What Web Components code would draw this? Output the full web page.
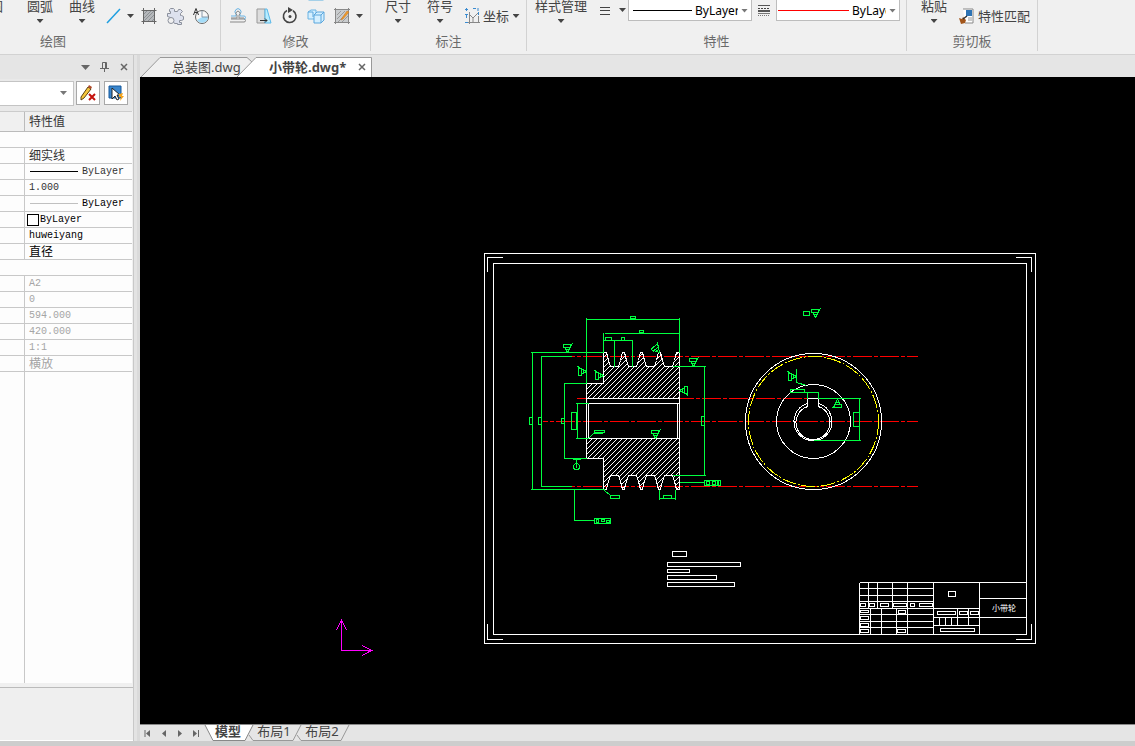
<!DOCTYPE html>
<html lang="zh-CN">
<head>
<meta charset="utf-8">
<title>小带轮.dwg</title>
<style>
html, body { height: 100%; margin: 0; }
body { font: 13px/16px "Noto Sans", "Noto Sans CJK SC", sans-serif; color: #444; background: #efefef; overflow: hidden; }
</style>
</head>
<body>
<cad-app></cad-app>
<script>
const base = `*{box-sizing:border-box} button,select{font:inherit;color:inherit;border:0;background:none;padding:0;margin:0;border-radius:0} svg{display:block;flex:none}`;
const define = (name, css, html) => customElements.define(name, class extends HTMLElement {
  constructor() {
    super();
    const t = document.createElement('template');
    t.innerHTML = `<style>${base}${css}</style>${typeof html === 'function' ? html(this) : html}`;
    this.attachShadow({ mode: 'open' }).append(t.content.cloneNode(true));
  }
});

define('drop-arrow', `:host{display:block;width:7px;height:4px;flex:none;background:#444;clip-path:polygon(0 0,100% 0,50% 100%)}`, '');

/* Ribbon */
define('ribbon-group',
  `:host{display:flex;flex-direction:column;flex:none;height:51px;border-right:1px solid #d2d2d2}
   .body{display:flex;align-items:flex-end;height:32px}
   .cap{text-align:center;line-height:18px;color:#6a6a6a}`,
  el => `<div class="body"><slot></slot></div><div class="cap">${el.getAttribute('caption')}</div>`);

define('large-button',
  `:host{display:block;width:42px;flex:none}
   button{display:flex;flex-direction:column;align-items:center;width:100%;padding-bottom:9px;white-space:nowrap;line-height:16px;gap:5px}`,
  `<button><span><slot></slot></span><drop-arrow></drop-arrow></button>`);

const icons = {
  line: `<path d="M2 16 15 2" stroke="#1f9fe0" stroke-width="1.5"/>`,
  hatch: `<path d="M4 3h11v11H4z" fill="#b5b8bb"/><path d="M4 7l4-4M4 11l8-8M4 14 15 3M8 14l7-7M12 14l3-3" stroke="#8c9094"/><path d="M1.500 3.500h15M1.500 14.500h15M3.500 1v16M14.500 1v16" stroke="#666"/>`,
  gear: `<path d="M1.500 6.500h3v-2h-1v-2l1-1h3l1 1v2h3l1-2h2l2 2-2 2v2h1l2 1v3l-2 1h-2v2h2v2h-4v-1h-3L4.500 10.500l-3-1z" fill="#dde1ee" stroke="#8b909c"/><circle cx="5" cy="13.500" r="3" fill="#f0f0f0" stroke="#8b909c"/>`,
  region: `<circle cx="10" cy="10" r="6.500" fill="#f7f7f7" stroke="#666"/><path d="M10 10h6a6 6 0 0 1-11 3z" fill="#a4dcf8"/><path d="M10 3.500V10h6.500" fill="none" stroke="#89a"/><path d="M1.500 8 4 1.500 6.500 8M2.500 5.500h3" fill="none" stroke="#333"/>`,
  offset: `<path d="M2 12h14M1 15h14a1 1 0 0 0 0-3" stroke="#888" fill="none"/><path d="M2 9h5V7a3 3 0 1 1 4 0v2h4a1.500 1.500 0 0 1 0 3" fill="none" stroke="#6ab4e4"/><path d="M2 11h6V8a2 2 0 1 1 2 0v3h5" fill="none" stroke="#888"/>`,
  trapezoid: `<path d="M2 2h8v14H2z" fill="#ddd" stroke="#999"/><path d="M10 2h2l4 14h-6z" fill="#b9edff" stroke="#5bb8e8"/><path d="M5 13.500h7M10 11.500l2 2-2 2" fill="none" stroke="#333"/>`,
  rotate: `<path d="M6 3.500A6.300 6.300 0 1 0 12 3.800" fill="none" stroke="#444" stroke-width="1.600"/><path d="M7 0v6l5-3z" fill="#444"/><circle cx="9" cy="9.500" r="1.500" fill="#444"/>`,
  boxes: `<path d="M1 5l3-2h5v6l-2 3H1z" fill="#d4efff" stroke="#6ab4e4"/><path d="M7 8l3-3h7v8l-3 3H7z" fill="#d4efff" stroke="#5aa6dc"/><path d="M7 8h7v8M14 8l3-3M1 5h5v5" fill="none" stroke="#5aa6dc"/>`,
  edit: `<path d="M3 3h12v12H3z" fill="#c9ccce"/><path d="M4 8l4-4M4 12l8-8M5 15 15 5M9 15l6-6" stroke="#999"/><path d="M1 2.500h16M1 15.500h16M2.500 1v16M15.500 1v16" stroke="#888"/><path d="M8 13l2-1 6-7-2-1-5 7z" fill="#ee9a2c" stroke="#c8741a" stroke-width=".5"/>`,
  coord: `<path d="M2 2.500h3M2 15.500h3M3.500 7v4M15 1v3M10 1.500h3M15.500 5v3" stroke="#3a8bd0"/><path d="M6.500 5v12M5 15.500h12M15.500 9v7M6 7l4 4 5-5M10 11v4" fill="none" stroke="#888"/><path d="M3.500 1v3M2 7.500h3" stroke="#3a8bd0"/>`,
  lines: `<path d="M4 7.500h10M4 10.500h10M4 14.500h10" stroke="#444"/>`,
  ltype: `<path d="M3 5.500h12" stroke="#555"/><path d="M3 8.500h12" stroke="#444" stroke-dasharray="2 1"/><path d="M3 11h12" stroke="#555" stroke-width="2"/><path d="M3 13.500h12" stroke="#777"/><path d="M3 15.500h12" stroke="#777" stroke-dasharray="1 1"/>`,
  match: `<path d="M5 2h10v14H7" fill="#fff" stroke="#888"/><path d="M8 3h6v6H8z" fill="#2e74b5"/><path d="M10 11h4M10 13h4" stroke="#999"/><path d="M1 11l3 1 1-2 3 3-1 3-4 1z" fill="#a3561b"/><path d="M5 12l4-3" stroke="#333" stroke-width="1.500"/>`,
  stubGray: `<path d="M1 16.500h16" stroke="#999"/>`,
  stubBlue: `<path d="M1.500 4h15v13h-15z" fill="#c9e9fb" stroke="#5bb0e0"/>`,
  stubDot: `<path d="M11 14h3v3h-3z" fill="#5b8fc8"/>`,
  stubGold: `<path d="M4 14h3v3H4z" fill="#a08a20"/>`,
  stubRed: `<path d="M13 14h2v3h-2z" fill="#d22"/>`,
  stubBox: `<path d="M5.500 4h9v12.500h-9z" fill="#fff" stroke="#888"/>`
};
define('tool-button',
  `:host{display:block;flex:none} button{display:flex;align-items:center;justify-content:center;gap:2px;width:26px;height:24px;white-space:nowrap}
   :host([narrow]) button{width:22px} :host([wide]) button{width:auto}`,
  el => `<button aria-label="${el.getAttribute('label') || ''}"><svg width="18" height="18" viewBox="0 0 18 18" fill="none">${icons[el.getAttribute('icon')] || ''}</svg><slot></slot></button>`);

define('style-select',
  `:host{display:block;flex:none}
   .box{display:flex;align-items:center;width:124px;height:24px;background:#fff;border:1px solid #bdbdbd;padding:3px 3px 0 var(--lead,4px);gap:3px}
   i{flex:1;height:1px;background:var(--line,#000)}
   select{appearance:none;width:var(--text,43px);flex:none;font-size:12px;line-height:16px;height:18px;color:#000;overflow:hidden;text-overflow:clip}
   drop-arrow{background:#777}`,
  el => `<div class="box"><i></i><select aria-label="${el.getAttribute('label')}"><option>ByLayer</option></select><drop-arrow></drop-arrow></div>`);

define('cad-ribbon',
  `:host{display:flex;height:55px;flex:none;overflow:hidden;background:#f0f0f0;border-bottom:1px solid #d2d2d2}
   .tools{display:grid;align-items:center;padding-bottom:4px;justify-items:center}
   .draw{grid-template-columns:22px 11px repeat(3,26px)}
   .modify{grid-template-columns:repeat(5,26px) 9px;margin-left:4px}
   .dim{grid-template-columns:auto 14px;margin-left:2px}
   .first{width:58px;margin-left:75px}
   .dimfirst{margin-left:6px}.style{width:56px;margin-left:6px}.paste{margin-left:6px}
   .props{display:flex;align-items:flex-end;padding-bottom:11px}
   .props tool-button{margin-left:3px}
   .props tool-button[narrow]{margin:0 1px}
   .props drop-arrow{margin:0 2px 9px 1px}
   .clip{justify-items:start;margin-left:3px}
   .g1{width:335px;margin-left:-114px}.g2{width:150px}.g3{width:156px}.g4{width:380px}.g5{width:131px}
   .second{--line:red;--text:34px;--lead:1px}`,
  `<ribbon-group class="g1" caption="绘图">
     <large-button class="first">椭圆</large-button><large-button>圆弧</large-button><large-button>曲线</large-button>
     <div class="tools draw"><span></span><span></span><tool-button icon="stubGray" label="矩形"></tool-button><tool-button icon="stubDot" label="点"></tool-button><span></span>
     <tool-button narrow icon="line" label="中心线"></tool-button><drop-arrow></drop-arrow><tool-button icon="hatch" label="剖面线"></tool-button><tool-button icon="gear" label="齿轮"></tool-button><tool-button icon="region" label="局部放大"></tool-button></div>
   </ribbon-group>
   <ribbon-group class="g2" caption="修改">
     <div class="tools modify"><tool-button icon="stubGold" label="删除"></tool-button><span></span><span></span><tool-button icon="stubBlue" label="复制"></tool-button><tool-button icon="stubGray" label="阵列"></tool-button><span></span>
     <tool-button icon="offset" label="偏移"></tool-button><tool-button icon="trapezoid" label="拉伸"></tool-button><tool-button icon="rotate" label="旋转"></tool-button><tool-button icon="boxes" label="分解"></tool-button><tool-button icon="edit" label="编辑"></tool-button><drop-arrow></drop-arrow></div>
   </ribbon-group>
   <ribbon-group class="g3" caption="标注">
     <large-button class="dimfirst">尺寸</large-button><large-button>符号</large-button>
     <div class="tools dim"><tool-button icon="stubRed" label="引出"></tool-button><span></span><tool-button wide icon="coord" label="坐标">坐标</tool-button><drop-arrow></drop-arrow></div>
   </ribbon-group>
   <ribbon-group class="g4" caption="特性">
     <large-button class="style">样式管理</large-button>
     <div class="props"><tool-button icon="lines" label="线宽"></tool-button><drop-arrow></drop-arrow><style-select label="线宽"></style-select><tool-button narrow icon="ltype" label="线型"></tool-button><style-select class="second" label="线型"></style-select></div>
   </ribbon-group>
   <ribbon-group class="g5" caption="剪切板">
     <large-button class="paste">粘贴</large-button>
     <div class="tools clip"><tool-button icon="stubBox" label="复制"></tool-button><tool-button wide icon="match" label="特性匹配">特性匹配</tool-button></div>
   </ribbon-group>`);

/* Property palette */
define('property-palette',
  `:host{display:flex;flex-direction:column;width:134px;background:#f0f0f0;border-right:1px solid #c8c8c8;overflow:hidden}
   header{display:flex;align-items:center;justify-content:flex-end;gap:8px;height:24px;padding-right:4px;background:#e5e5e5}
   header button{width:11px;height:16px;display:grid;place-items:center}
   .bar{display:flex;align-items:center;gap:4px;height:32px;padding:0 5px 4px 0;background:#e9e9e9}
   .combo{display:flex;align-items:center;flex:1;height:25px;background:#fff;border:1px solid #c4c4c4;border-left:0;padding-right:6px;margin-right:-2px}
   .combo select{appearance:none;flex:1;min-width:0}
   .combo drop-arrow{background:#777}
   .bar button{width:24px;height:24px;background:#fff;border:1px solid #a8a8a8;display:grid;place-items:center}
   .grid{flex:1;min-height:0;overflow:hidden;margin-right:1px;border-top:1px solid #ccc;background:linear-gradient(90deg,#fdfdfd 24px,#c8c8c8 24px 25px,#fdfdfd 25px)}
   table{border-collapse:separate;border-spacing:0;width:100%;table-layout:fixed}
   th,td{padding:0;height:16px;line-height:15px;border-bottom:1px solid #c8c8c8;text-align:left;font-weight:400;font-size:12px;white-space:nowrap;color:#333}
   td{font-family:"Liberation Mono","Noto Sans CJK SC",monospace;font-size:12px}
   thead th{height:20px;line-height:18px;background:#f0f0f0;border-bottom-color:#bbb;padding-left:4px}
   thead th:first-child,tbody th{width:25px;border-right:1px solid #c8c8c8}
   thead th:first-child{border-right:1px solid #bbb}
   td{padding-left:4px} td[colspan]{background:#fdfdfd}
   td div{display:flex;align-items:center;height:15px}
   .m{font-size:10px}
   .c{padding-top:3px}
   .dark td,.dark{color:#000} .off td{color:#a5a5a5}
   i{width:48px;height:1px;background:#000;margin:0 4px 0 1px} i.l{background:#c0c0c0}
   b{width:12px;height:12px;border:1px solid #000;background:#fff;margin:0 1px 0 -2px}
   .desc{height:58px;border-top:4px solid #f0f0f0;border-bottom:1px solid #fff;background:#efefef}
   .desc p{margin:0;border-top:1px solid #bbb}`,
  () => {
    const row = (v, c = '') => `<tr class="${c}"><th></th><td><div>${v}</div></td></tr>`;
    const m = v => `<span class="m">${v}</span>`;
    const c = v => `<span class="c">${v}</span>`;
    const cat = '<tr><td colspan="2"></td></tr>';
    return `<header>
      <button aria-label="菜单"><svg width="9" height="5"><path d="M0 0h9L4.500 5z" fill="#666"/></svg></button>
      <button aria-label="固定"><svg width="9" height="10" fill="none" stroke="#666"><path d="M2.500 6V.5h4V6M0 6.500h9M4.500 7v3M5.500 1v5"/></svg></button>
      <button aria-label="关闭"><svg width="8" height="8"><path d="M1 1l6 6M7 1 1 7" stroke="#666" stroke-width="1.500"/></svg></button></header>
    <div class="bar"><div class="combo"><select aria-label="对象"><option></option></select><drop-arrow></drop-arrow></div>
      <button aria-label="取消选择"><svg width="18" height="18"><path d="M2 13 9 3l3 2-7 9-3 2z" fill="#f6c73c" stroke="#5a4010"/><path d="M9 3l1-2 3 2-1 2z" fill="#b04a2a"/><path d="M10 10l6 6M16 10l-6 6" stroke="#c4120c" stroke-width="2"/></svg></button>
      <button aria-label="快速选择"><svg width="18" height="18"><path d="M2 2h12v12H2z" fill="#3b86cc" stroke="#15599c"/><path d="M5 4v11l3-3 2 4 2-1-2-4h3z" fill="#fff" stroke="#222"/><path d="M12 10l4-1-1 3h2l-4 5 1-4h-2z" fill="#f5a31a"/></svg></button></div>
    <div class="grid"><table><thead><tr><th></th><th scope="col">特性值</th></tr></thead><tbody>
      ${cat}${row(c('细实线'))}${row('<i></i>' + m('ByLayer'))}${row(m('1.000'))}${row('<i class="l"></i>' + m('ByLayer'), 'dark')}
      ${row('<b></b>' + m('ByLayer'), 'dark')}${row(m('huweiyang'), 'dark')}${row(c('直径'), 'dark')}${cat}
      ${['A2', '0', '594.000', '420.000', '1:1'].map(v => row(m(v), 'off')).join('')}${row(c('横放'), 'off')}
    </tbody></table></div><div class="desc"><p></p></div>`;
  });

/* Document tabs */
define('document-tabs',
  `:host{display:flex;height:22px;flex:none;background:#e5e5e5;padding-top:2px}
   .tab{position:relative;display:flex;align-items:center;height:20px;white-space:nowrap}
   .tab>svg{position:absolute;left:0;top:0}
   .tab button{position:relative;line-height:20px}
   .a{width:113px;padding-left:32px}
   .b{width:136px;margin-left:-16px;padding:0 7px 0 32px;justify-content:space-between;font-weight:700}`,
  `<div class="tab a"><svg width="113" height="20"><path d="M1 20 20 .5H107L112 5V20" fill="#f0f0f0" stroke="#999"/></svg><button>总装图.dwg</button></div>
   <div class="tab b"><svg width="136" height="20"><path d="M0 20 19 .5H134.500V20" fill="#fff" stroke="#999"/></svg><button>小带轮.dwg*</button><button aria-label="关闭"><svg width="8" height="8"><path d="M1 1l6 6M7 1 1 7" stroke="#666" stroke-width="1.500"/></svg></button></div>`);

/* Layout tabs */
define('layout-tabs',
  `:host{display:flex;height:17px;flex:none;background:#e5e5e5;border-top:1px solid #888}
   nav{display:flex;width:65px;flex:none;padding-top:1px}
   nav button{width:16px;display:grid;place-items:center}
   .tab{position:relative;height:16px;width:48px;flex:none}
   .tab svg{position:absolute;left:0;top:0;overflow:visible}
   .tab button{position:relative;display:block;width:100%;line-height:12px;height:16px;padding:0 6px 4px 0;text-align:center;white-space:nowrap}
   .tab.on button{padding-right:2px}
   .on{font-weight:700;z-index:1}`,
  `<nav><button aria-label="首个"><svg width="8" height="7"><path d="M1 0v7" stroke="#666"/><path d="M6 0v7L2 3.500z" fill="#666"/></svg></button><button aria-label="上一个"><svg width="8" height="7"><path d="M6 0v7L2 3.500z" fill="#666"/></svg></button><button aria-label="下一个"><svg width="8" height="7"><path d="M2 0v7l4-3.500z" fill="#666"/></svg></button><button aria-label="末个"><svg width="8" height="7"><path d="M1 0v7l4-3.500z" fill="#666"/><path d="M6.500 0v7" stroke="#666"/></svg></button></nav>
   <div class="tab on"><svg width="48" height="16"><path d="M0 0 8 15.500H40L48 0" fill="#fff" stroke="#888"/></svg><button>模型</button></div>
   <div class="tab"><svg width="48" height="16"><path d="M-4 10-0 15.500H40L48 0" fill="none" stroke="#999"/></svg><button>布局1</button></div>
   <div class="tab"><svg width="48" height="16"><path d="M-4 10-0 15.500H40L48 0" fill="none" stroke="#999"/></svg><button>布局2</button></div>`);

/* Model space: everything is drawn in world units, one unit per pixel */
const rects = list => list.map(([x, y, x2, y2]) => `<rect x="${x}.5" y="${y}.5" width="${x2 - x}" height="${y2 - y}"/>`).join('');
const segs = list => list.map(([x, y, x2, y2]) => `<line x1="${x}.5" y1="${y}.5" x2="${x2}.5" y2="${y2}.5"/>`).join('');
const rough = (x, y, a = 0) => `<g transform="translate(${x}.5 ${y}.5) rotate(${a})"><rect x="-4" y="-8" width="7" height="3"/><path d="M-3-5 0 0 5-9M-2-3h4"/></g>`;
const teeth = (flat, mid, tip) => {
  let d = `V${tip}H606L608 ${mid}L610 ${flat}`;
  for (const x of [623, 641, 659]) d += `H${x - 5}L${x - 3} ${mid}L${x - 1} ${tip}H${x + 1}L${x + 3} ${mid}L${x + 5} ${flat}`;
  return d + `H672L674 ${mid}L676 ${tip}H679`;
};
const upper = `M586 398V383H603${teeth(366, 360, 352)}V398Z`;
const lower = `M586 438V458H603${teeth(475, 481, 489)}V438Z`;
let hatching = '';
for (let s = 940; s < 1170; s += 5) hatching += `M${s - 350} 350L${s - 490} 490`;

define('model-canvas',
  `:host{display:block;flex:1;min-height:0;background:#000;overflow:hidden}
   svg{width:100%;height:100%}
   .d{fill:none;stroke-width:1;shape-rendering:crispEdges} .w{stroke:#fff}.g{stroke:#00ff40}.r{stroke:#f00}
   text{font:8px "Noto Sans CJK SC",sans-serif;fill:#fff}`,
  `<svg viewBox="140 77 995 647" preserveAspectRatio="xMinYMin meet" role="img" aria-label="小带轮图纸">
   <defs><clipPath id="h"><path d="${upper}${lower}"/></clipPath></defs>
   <g class="d r" stroke-dasharray="19 2 4 2">
     <path d="M571 356.500H918M571 486.500H918" stroke-dashoffset="15"/><path d="M577 398.500H808" stroke-dashoffset="10"/><path d="M543 421.500H918" stroke-dashoffset="14"/></g>
   <g class="d w">
     ${rects([[484,253,1035,643],[493,263,1026,634]])}
     <path d="M487.500 272V257.500H503M1016 257.500H1031.500V272M487.500 624V639.500H503M1016 639.500H1031.500V624"/>
     <g transform="translate(.5 .5)">
       <path d="${hatching}" clip-path="url(#h)"/>
       <path d="${upper}${lower}"/>
       <path d="M586 398V438M679 398V438M586 403H679M588 403V438M677 403V438M586 402L588 404M679 402L677 404"/>
     </g>
     <circle cx="813.500" cy="421.500" r="68"/><circle cx="813.500" cy="421.500" r="37"/>
     <path d="M807.500 403.500V398.500H818.500V403.500A19 19 0 1 1 807.500 403.500V406.500M818.500 403.500V406.500A17 17 0 1 1 807.500 406.500"/>
     ${rects([[672,551,686,556],[667,562,740,566],[667,569,689,572],[667,575,716,579],[667,582,734,586]])}
     ${segs([[859,582,1026,582],[859,582,859,634],[868,582,868,608],[877,582,877,608],[892,582,892,608],[907,582,907,634],[933,582,933,634],[979,582,979,634],
       [859,588,933,588],[859,595,933,595],[859,601,933,601],[859,608,979,608],[859,614,933,614],[859,621,933,621],[859,627,933,627],
       [870,608,870,634],[881,608,881,634],[896,608,896,634],[933,617,1026,617],[933,625,979,625],[979,598,1026,598],
       [957,608,957,625],[968,608,968,625],[939,617,939,625],[945,617,945,625],[951,617,951,625]])}
     ${rects([[860,603,865,606],[869,603,874,606],[880,603,888,606],[893,603,906,606],[910,603,914,606],[919,603,932,606],
       [860,610,868,612],[860,616,868,619],[860,623,868,626],[860,629,868,632],[898,610,905,613],[897,629,905,632],
       [937,611,955,614],[959,611,967,614],[970,611,978,614],[940,628,974,631],[948,591,955,596]])}
   </g>
   <circle class="d" cx="813.500" cy="421.500" r="65" stroke="#ff0" stroke-dasharray="14 2 2 2"/>
   <g class="d g">
     ${segs([[586,319,679,319],[586,317,586,383],[679,317,679,352],[604,333,678,333],[603,332,603,352],[603,340,632,340],[614,339,614,366],[632,339,632,366],
       [532,352,532,489],[530,352,603,352],[530,489,604,489],[541,356,541,486],[540,356,571,356],[540,486,571,486],
       [564,383,564,458],[563,383,586,383],[563,458,586,458],[577,403,577,438],[575,403,588,403],[575,438,588,438],
       [588,438,594,432],[576,459,576,467],[572,459,580,459],[574,489,574,520],[574,520,594,520],[604,490,610,495],
       [659,489,659,499],[675,489,675,499],[659,498,675,498],[679,482,704,482],[704,366,704,475],[672,366,705,366],[672,475,705,475],
       [818,398,860,398],[859,398,859,440],[813,440,860,440],[790,392,818,392],[807,391,807,398],[818,391,818,398],[796,368,796,382],[796,382,806,385]])}
     ${rects([[630,316,635,318],[639,330,643,332],[605,337,611,340],[621,337,624,340],[529,417,532,424],[538,417,541,424],[561,418,564,423],
       [571,412,576,429],[594,430,604,432],[594,432,602,433],[610,495,619,498],[610,496,619,496],[663,495,671,498],[701,416,704,425],
       [853,412,859,426],[790,389,804,392],[803,311,809,315],[594,518,610,523],[596,519,598,522],[601,519,604,521],[606,520,609,522],
       [704,480,720,485],[706,481,709,484],[712,481,715,484],[717,481,718,484]])}
     <circle cx="576.500" cy="466.500" r="3"/>
     ${rough(567,352)}${rough(693,366)}${rough(655,438)}${rough(586,371,-90)}${rough(603,375,-90)}${rough(679,390,90)}${rough(659,352,-40)}${rough(815,317)}${rough(796,376,-90)}${rough(837,399,180)}
   </g>
   <path class="d" stroke="#f0f" d="M341.500 621V650.500H371M336.500 630 341.500 620.500 346.500 630M362 645.500 371.500 650.500 362 655.500"/>
   <text x="992" y="611">小带轮</text>
   </svg>`);

define('cad-app',
  `:host{display:flex;flex-direction:column;height:100vh}
   main{display:flex;flex:1;min-height:0;gap:3px;background:#e3e3e3}
   section{display:flex;flex-direction:column;flex:1;min-width:0;border-left:3px solid #dadada}
   footer{height:5px;flex:none;background:#cdcdcd}`,
  `<cad-ribbon></cad-ribbon>
   <main><property-palette></property-palette><section><document-tabs></document-tabs><model-canvas></model-canvas><layout-tabs></layout-tabs></section></main>
   <footer></footer>`);
</script>
</body>
</html>
